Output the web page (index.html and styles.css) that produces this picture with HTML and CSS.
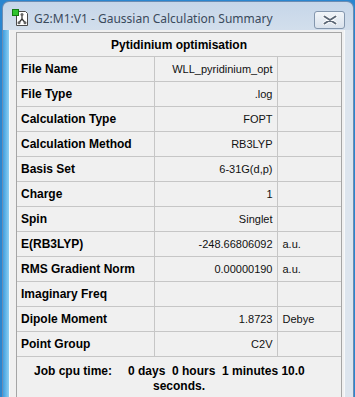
FILE: index.html
```html
<!DOCTYPE html>
<html lang="en">
<head>
  <meta charset="UTF-8">
  <meta name="viewport" content="width=device-width, initial-scale=1.0">
  <title>Gaussian Calculation Summary</title>
  <link rel="stylesheet" href="styles.css">
</head>
<body>

  <div class="window">
    <div class="titlebar">
      <!-- 가우시안 아이콘 -->
      <svg class="app-icon" width="17" height="17" viewBox="0 0 17 17">
        <path d="M4.5 2.5 H13.5 L15.5 4.5 V16.5 H4.5 Z" fill="#fff" stroke="#4a4a4a"/>
        <line x1="10" y1="6" x2="10" y2="10" stroke="#333" stroke-width="1.2"/>
        <line x1="10" y1="10" x2="7" y2="13.5" stroke="#333" stroke-width="1.2"/>
        <line x1="10" y1="10" x2="13" y2="13.5" stroke="#333" stroke-width="1.2"/>
        <circle cx="10" cy="5.5" r="1.5" fill="#666"/>
        <circle cx="7" cy="13.8" r="1.5" fill="#666"/>
        <circle cx="13" cy="13.8" r="1.5" fill="#666"/>
        <rect x="0.5" y="0.5" width="6" height="6" fill="#2fc42f" stroke="#137a13"/>
      </svg>
      <span class="title">G2:M1:V1 - Gaussian Calculation Summary</span>
      <button class="close-button">
        <svg width="16" height="10" viewBox="0 0 16 10">
          <path d="M2.5 1.5 L13.5 8.5 M13.5 1.5 L2.5 8.5" stroke="#fff" stroke-width="3.6" stroke-linecap="round"/>
          <path d="M2.5 1.5 L13.5 8.5 M13.5 1.5 L2.5 8.5" stroke="#5b6776" stroke-width="2" stroke-linecap="round"/>
        </svg>
      </button>
    </div>

    <div class="frame-body">
      <div class="frame-left"></div>
      <div class="client">
        <div class="panel">
          <table class="summary">
            <colgroup>
              <col class="col-name">
              <col class="col-value">
              <col>
            </colgroup>
            <tr><th colspan="3">Pytidinium optimisation</th></tr>
            <tr><td class="name">File Name</td><td class="value">WLL_pyridinium_opt</td><td class="unit"></td></tr>
            <tr><td class="name">File Type</td><td class="value">.log</td><td class="unit"></td></tr>
            <tr><td class="name">Calculation Type</td><td class="value">FOPT</td><td class="unit"></td></tr>
            <tr><td class="name">Calculation Method</td><td class="value">RB3LYP</td><td class="unit"></td></tr>
            <tr><td class="name">Basis Set</td><td class="value">6-31G(d,p)</td><td class="unit"></td></tr>
            <tr><td class="name">Charge</td><td class="value">1</td><td class="unit"></td></tr>
            <tr><td class="name">Spin</td><td class="value">Singlet</td><td class="unit"></td></tr>
            <tr><td class="name">E(RB3LYP)</td><td class="value">-248.66806092</td><td class="unit">a.u.</td></tr>
            <tr><td class="name">RMS Gradient Norm</td><td class="value">0.00000190</td><td class="unit">a.u.</td></tr>
            <tr><td class="name">Imaginary Freq</td><td class="value"></td><td class="unit"></td></tr>
            <tr><td class="name">Dipole Moment</td><td class="value">1.8723</td><td class="unit">Debye</td></tr>
            <tr><td class="name">Point Group</td><td class="value">C2V</td><td class="unit"></td></tr>
          </table>

          <!-- 계산 시간 -->
          <div class="cpu-time">
            <span class="cpu-label">Job cpu time:</span>
            <span class="cpu-value">0 days  0 hours  1 minutes 10.0<br><span class="cpu-wrap">seconds.</span></span>
          </div>
        </div>
      </div>
      <div class="frame-right"></div>
    </div>
  </div>

</body>
</html>
```

FILE: styles.css
```css
body {
  margin: 0;
  width: 355px;
  height: 397px;
  overflow: hidden;
  background-color: #2a86d0; /* 바탕화면 파란색 */
}

.window {
  width: 350px;
  height: 396px;
  margin: 1px 0 0 2px;
  display: flex;
  flex-direction: column;
  border: 1px solid #6b8cb3;
  border-bottom: none;
  border-radius: 7px 7px 0 0;
  background: linear-gradient(#c6d6e9, #d3dfec 30px);
  overflow: hidden;
}

.titlebar {
  height: 28px;
  display: flex;
  align-items: center;
  padding: 0 8px 0 9px;
  flex-shrink: 0;
}

.app-icon {
  margin-top: 3px;
  flex-shrink: 0;
}

.title {
  flex: 1;
  margin-left: 5px;
  margin-top: 5px;
  font-family: "Noto Sans", "Open Sans", sans-serif;
  font-size: 12px;
  color: #3a4a5c;
  white-space: nowrap;
}

.close-button {
  width: 31px;
  height: 18px;
  margin-top: 8px;
  padding: 0;
  display: flex;
  align-items: center;
  justify-content: center;
  border: 1px solid #8396ad;
  border-radius: 3px;
  background: linear-gradient(#f1f5f9, #d9e2ec);
}

.frame-body {
  flex: 1;
  display: flex;
}

.frame-left {
  width: 6px;
  background: linear-gradient(to right, #3f9fe0, #8fd0f2);
}

.frame-right {
  width: 8px;
  background: #dde5ee;
  border-left: 1px solid #f6f8fa;
}

.client {
  flex: 1;
  background-color: #f0f0f0;
  border-left: 1px solid #f8fbfd;
  padding: 2px 2px 0 6px;
  display: flex;
}

.panel {
  flex: 1;
  border: 1px solid #a5a5a5;
  border-bottom: none;
  font-family: "Liberation Sans", Arial, sans-serif;
  color: #000;
}

.summary {
  width: 100%;
  border-collapse: collapse;
  table-layout: fixed;
}

.col-name {
  width: 137px;
}

.col-value {
  width: 123px;
}

.summary th {
  height: 23px;
  padding: 0;
  font-size: 12px;
  font-weight: bold;
  text-align: center;
  border-bottom: 1px solid #c6c6c6;
}

.summary td {
  height: 24px;
  padding: 0 4px;
  border: 1px solid #c6c6c6;
  white-space: nowrap;
  overflow: hidden;
}

.summary td:first-child {
  border-left: none;
}

.summary td:last-child {
  border-right: none;
}

.summary .name {
  font-size: 12px;
  font-weight: bold;
}

.summary .value {
  font-size: 11px;
  text-align: right;
  color: #111;
}

.summary .unit {
  font-size: 11px;
  color: #111;
  padding-left: 5px;
}

.cpu-time {
  display: flex;
  padding: 7px 0 0 17px;
  font-size: 12px;
  font-weight: bold;
  line-height: 15px;
}

.cpu-label {
  width: 94px;
}

.cpu-value {
  white-space: pre;
}

.cpu-wrap {
  padding-left: 25px;
}
```
